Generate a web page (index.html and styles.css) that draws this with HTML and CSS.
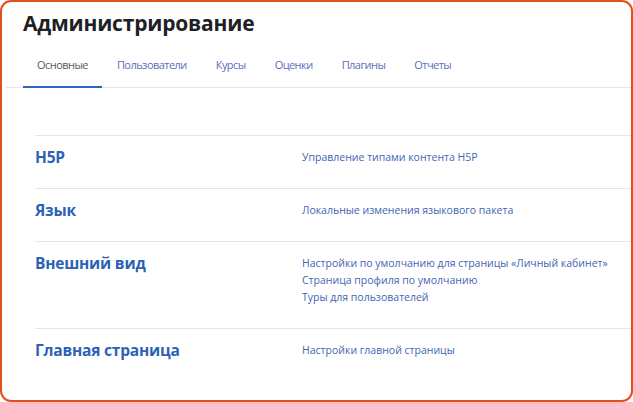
FILE: index.html
```html
<!DOCTYPE html>
<html lang="ru">
<head>
<meta charset="utf-8">
<link rel="stylesheet" href="styles.css">
</head>
<body>
<div class="frame">
  <h1 class="title">Администрирование</h1>
  <nav class="tabs">
    <a class="tab active">Основные</a>
    <a class="tab">Пользователи</a>
    <a class="tab">Курсы</a>
    <a class="tab">Оценки</a>
    <a class="tab">Плагины</a>
    <a class="tab">Отчеты</a>
  </nav>
  <div class="sections">
    <div class="row">
      <h2 class="heading">H5P</h2>
      <div class="links"><a>Управление типами контента H5P</a></div>
    </div>
    <div class="row">
      <h2 class="heading">Язык</h2>
      <div class="links"><a>Локальные изменения языкового пакета</a></div>
    </div>
    <div class="row">
      <h2 class="heading">Внешний вид</h2>
      <div class="links">
        <a>Настройки по умолчанию для страницы «Личный кабинет»</a>
        <a>Страница профиля по умолчанию</a>
        <a>Туры для пользователей</a>
      </div>
    </div>
    <div class="row">
      <h2 class="heading">Главная страница</h2>
      <div class="links"><a>Настройки главной страницы</a></div>
    </div>
  </div>
</div>
</body>
</html>
```

FILE: styles.css
```css
html, body {
  margin: 0;
  padding: 0;
  background: #ffffff;
}
body {
  font-family: "Open Sans", "Noto Sans", "Liberation Sans", sans-serif;
}
.frame {
  width: 633px;
  height: 402px;
  box-sizing: border-box;
  border: 2px solid #e2501e;
  border-radius: 11px;
  overflow: hidden;
  background: #ffffff;
}
.title {
  margin: 0;
  padding: 6px 0 0 21px;
  font-size: 21px;
  line-height: 30px;
  font-weight: 700;
  letter-spacing: -0.2px;
  color: #1d2125;
}
.tabs {
  display: flex;
  gap: 1px;
  margin: 13px 0 0 4px;
  padding-left: 17px;
  border-bottom: 1px solid #e6e6e6;
}
.tab {
  padding: 5px 14px 13px;
  font-size: 11px;
  line-height: 17px;
  letter-spacing: -0.55px;
  color: #5a6fb8;
  border-bottom: 2px solid transparent;
  margin-bottom: -1px;
}
.tab.active {
  color: #555a60;
  border-bottom-color: #2d67c4;
}
.sections {
  margin: 47px 0 0 33px;
}
.row {
  display: grid;
  grid-template-columns: 267px 1fr;
  border-top: 1px solid #e6e6e6;
  padding: 11px 0 22px;
}
.heading {
  margin: 0;
  padding-top: 2px;
  font-size: 15.5px;
  line-height: 17px;
  font-weight: 700;
  letter-spacing: -0.2px;
  color: #2c62b6;
}
.links {
  display: flex;
  flex-direction: column;
  padding-top: 2px;
}
.links a {
  font-size: 10.5px;
  line-height: 17px;
  color: #4365b2;
}
```
